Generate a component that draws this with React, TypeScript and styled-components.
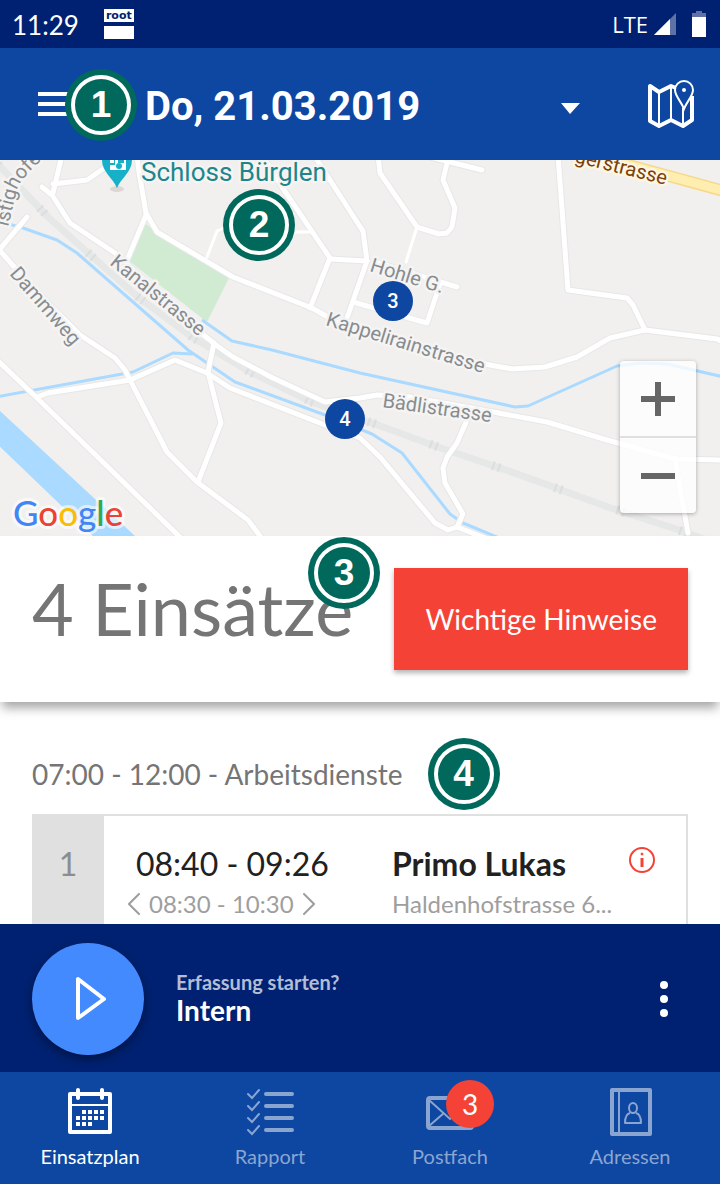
import React from "react";
import styled, { createGlobalStyle } from "styled-components";

const color = {
  primary: "#0d47a1",
  primaryDark: "#002171",
  accent: "#448aff",
  danger: "#f44336",
  guide: "#00695c",
  text: "#212121",
  secondary: "#757575",
  hint: "#9e9e9e",
  line: "#e0e0e0",
  inactive: "#8ba5d1",
};

const GlobalStyle = createGlobalStyle`
  *, *::before, *::after { box-sizing: border-box; }
  html, body { margin: 0; padding: 0; }
  body { font-family: Lato, "Open Sans", sans-serif; background: #fff; }
  button, select { font: inherit; color: inherit; border: 0; margin: 0; padding: 0; background: none; cursor: pointer; }
  h1, h2, h3, p { margin: 0; font-weight: 400; }
  svg { display: block; }
`;

const Screen = styled.div`
  display: flex;
  flex-direction: column;
  height: 100vh;
  overflow: hidden;
`;

/* Status bar */
const StatusBar = styled.div`
  display: flex;
  align-items: center;
  flex: none;
  height: 48px;
  padding: 0 14px 0 12px;
  background: ${color.primaryDark};
  color: #fff;
`;
const Clock = styled.time`
  font-size: 26px;
  line-height: 32px;
  padding-top: 2px;
  margin-right: 25px;
`;
const RootBadge = styled.div`
  display: grid;
  grid-template-rows: 13px 13px;
  gap: 4px;
  width: 30px;
`;
const RootTag = styled.span`
  background: #fff;
  color: ${color.primaryDark};
  font: 700 11px/13px "DejaVu Sans", sans-serif;
  text-align: center;
`;
const RootBlock = styled.span`
  background: #fff;
`;
const StatusIcons = styled.div`
  display: flex;
  align-items: center;
  margin-left: auto;
`;
const Network = styled.span`
  font-family: "Open Sans", sans-serif;
  font-size: 22px;
  line-height: 32px;
  margin-right: 6px;
`;
const Battery = styled.svg`
  margin-left: 16px;
`;

/* App bar */
const AppBar = styled.header`
  position: relative;
  display: flex;
  align-items: center;
  flex: none;
  height: 112px;
  padding: 0 26px 0 38px;
  background: ${color.primary};
  color: #fff;
`;
const IconButton = styled.button`
  display: grid;
  place-items: center;
  flex: none;
`;
const DatePicker = styled.div`
  display: grid;
  align-items: center;
  flex: 1;
  padding-top: 6px;
  margin: 0 68px 0 71px;
`;
const DateSelect = styled.select`
  grid-area: 1 / 1;
  appearance: none;
  font: 700 40px/56px Roboto, sans-serif;
  color: #fff;
  option { color: ${color.text}; }
`;
const DateArrow = styled.svg`
  grid-area: 1 / 1;
  justify-self: end;
  pointer-events: none;
  margin-top: 2px;
`;

/* Numbered guide markers that lie over the screen */
const Guide = styled.span<{ $x?: number; $y?: number }>`
  position: ${(p) => (p.$x === undefined ? "static" : "absolute")};
  left: ${(p) => p.$x ?? 0}px;
  top: ${(p) => p.$y ?? 0}px;
  z-index: 2;
  display: grid;
  flex: none;
  width: 72px;
  height: 72px;
  padding: 6px;
  border-radius: 50%;
  background: ${color.guide};
`;
const GuideRing = styled.span`
  display: grid;
  place-items: center;
  border: 4px solid #fff;
  border-radius: 50%;
  color: #fff;
  font: 700 37px/44px "Liberation Sans", Arial, sans-serif;
`;

/* Map */
const MapArea = styled.section`
  position: relative;
  flex: none;
  height: 376px;
  background: #f1f0ef;
`;
const MapCanvas = styled.svg`
  width: 100%;
  height: 100%;
`;
const Label = styled.text`
  font-family: Roboto, sans-serif;
  font-size: 20px;
  fill: #878c90;
  stroke: #f5f4f3;
  stroke-width: 5px;
  stroke-linejoin: round;
  paint-order: stroke;
`;
const PlaceLabel = styled(Label)`
  font-size: 26px;
  fill: #1c868c;
`;
const MainRoadLabel = styled(Label)`
  fill: #7b3f0c;
  stroke: #fdf6e3;
`;
const Brand = styled.text`
  font: 500 35px Lato, sans-serif;
  stroke: rgba(255, 255, 255, 0.6);
  stroke-width: 6px;
  stroke-linejoin: round;
  paint-order: stroke;
`;
const Pin = styled.button<{ $x: number; $y: number }>`
  position: absolute;
  left: ${(p) => p.$x}px;
  top: ${(p) => p.$y}px;
  width: 40px;
  height: 40px;
  border-radius: 50%;
  background: ${color.primary};
  color: #fff;
  font: 500 20px/40px Roboto, sans-serif;
  text-align: center;
`;
const ZoomControl = styled.div`
  position: absolute;
  right: 24px;
  bottom: 23px;
  display: grid;
  width: 76px;
  border-radius: 4px;
  background: rgba(255, 255, 255, 0.78);
  box-shadow: 0 1px 4px rgba(0, 0, 0, 0.3);
`;
const ZoomButton = styled.button`
  display: grid;
  place-items: center;
  height: 75px;
  & + & {
    height: 77px;
    border-top: 2px solid ${color.line};
  }
`;

/* Summary */
const Summary = styled.section`
  position: relative;
  z-index: 1;
  display: flex;
  align-items: flex-start;
  justify-content: space-between;
  flex: none;
  padding: 32px;
  background: #fff;
  box-shadow: 0 8px 10px -2px rgba(0, 0, 0, 0.35);
`;
const Count = styled.h1`
  font-size: 72px;
  line-height: 80px;
  color: ${color.secondary};
`;
const NoticeButton = styled.button`
  height: 102px;
  padding: 0 31px;
  background: ${color.danger};
  color: #fff;
  font-size: 28px;
  line-height: 36px;
  white-space: nowrap;
  box-shadow: 0 3px 5px rgba(0, 0, 0, 0.3);
`;

/* Job list */
const Jobs = styled.main`
  flex: 1;
  min-height: 0;
  overflow: hidden;
  padding: 36px 32px 0;
`;
const SlotHeader = styled.div`
  display: flex;
  align-items: center;
  gap: 25px;
  padding-bottom: 4px;
`;
const SlotTitle = styled.h2`
  font-size: 28px;
  line-height: 36px;
  color: ${color.secondary};
`;
const JobCard = styled.article`
  display: grid;
  grid-template-columns: 72px minmax(0, 1fr);
  height: 160px;
  background: ${color.line};
  border: 2px solid ${color.line};
  border-left: 0;
`;
const JobNumber = styled.span`
  padding-top: 28px;
  text-align: center;
  font-size: 32px;
  line-height: 40px;
  color: #8d8d8d;
`;
const JobBody = styled.div`
  display: grid;
  grid-template-columns: 256px minmax(0, 1fr) 26px;
  grid-template-rows: 40px 40px;
  padding: 28px 31px 0 32px;
  background: #fff;
`;
const JobTime = styled.p`
  font-size: 32px;
  line-height: 40px;
  color: ${color.text};
`;
const JobName = styled.h3`
  font-size: 32px;
  line-height: 40px;
  font-weight: 700;
  color: ${color.text};
`;
const JobWindow = styled.p`
  display: flex;
  align-items: center;
  gap: 9px;
  margin-left: -8px;
  font-size: 24px;
  line-height: 40px;
  color: ${color.hint};
`;
const JobAddress = styled.p`
  font-size: 24px;
  line-height: 40px;
  color: ${color.hint};
`;
const InfoButton = styled(IconButton)`
  height: 32px;
`;

/* Recorder */
const Recorder = styled.section`
  display: flex;
  align-items: center;
  flex: none;
  height: 148px;
  padding: 2px 44px 0 32px;
  background: ${color.primaryDark};
  color: #fff;
`;
const PlayButton = styled(IconButton)`
  width: 112px;
  height: 112px;
  padding-left: 4px;
  border-radius: 50%;
  background: ${color.accent};
  box-shadow: 0 4px 10px rgba(0, 0, 0, 0.4);
`;
const RecorderText = styled.div`
  flex: 1;
  padding: 0 0 2px 32px;
`;
const RecorderHint = styled.p`
  font-size: 20px;
  line-height: 24px;
  font-weight: 700;
  color: #b3bdd5;
`;
const RecorderTitle = styled.p`
  font-size: 28px;
  line-height: 32px;
  font-weight: 700;
`;
const MoreButton = styled(IconButton)`
  width: 24px;
  height: 48px;
`;

/* Bottom navigation */
const BottomNav = styled.nav`
  display: grid;
  grid-template-columns: repeat(4, 1fr);
  flex: none;
  height: 112px;
  background: ${color.primary};
`;
const Tab = styled.a<{ $active?: boolean }>`
  display: flex;
  flex-direction: column;
  align-items: center;
  gap: 8px;
  padding-top: 16px;
  font-size: 20px;
  line-height: 24px;
  text-decoration: none;
  color: ${(p) => (p.$active ? "#fff" : color.inactive)};
`;
const TabIcon = styled.span`
  position: relative;
`;
const TabBadge = styled.span`
  position: absolute;
  left: 20px;
  top: -8px;
  width: 48px;
  height: 48px;
  border-radius: 50%;
  background: ${color.danger};
  color: #fff;
  font-size: 28px;
  line-height: 48px;
  text-align: center;
`;

const GuideMark = ({ n, x, y }: { n: number; x?: number; y?: number }) => (
  <Guide $x={x} $y={y}>
    <GuideRing>{n}</GuideRing>
  </Guide>
);

const roads = [
  "M137 155L139 172L146 213L157 232L233 277L312 308L328 317L400 345L490 365L512 369L545 367L577 357L610 338L645 330L717 339L724 343",
  "M558 155L568 290L627 298L633 305L645 330",
  "M378 155L380 173L417 227L439 234L447 233L452 227L455 208L443 180L447 163",
  "M430 157L482 170",
  "M312 152L357 222L363 231L367 261",
  "M262 155L282 187L330 258L310 308",
  "M330 259L367 261L347 318",
  "M353 302L427 323L440 284",
  "M375 262L457 287",
  "M146 215L128 258",
  "M42 187L52 195L70 223L115 253L200 332L216 345L233 357L273 378L325 402L360 398L377 395L410 397L493 412L547 422L607 440L675 459L724 460",
  "M675 459L688 533",
  "M62 155L53 193",
  "M53 184L87 180L110 164",
  "M27 217L0 249L-4 250",
  "M-4 246L30 285L80 335L115 358L125 370L130 380L167 452L197 482L248 520L263 540",
  "M-4 359L37 398L183 540",
  "M37 397L48 393L130 380L175 360L207 373L230 388L325 425L360 438L380 457L435 523L448 530L457 527L490 540",
  "M457 527L463 514L445 483L443 468L447 457L457 443L467 420",
  "M214 343L208 372L221 423L198 482",
];
const lanes = ["M417 227L406 262", "M207 257L217 231L226 227", "M312 232L290 232"];
const streams = [
  "M5 223L23 228L57 240L77 253L188 350L235 382L325 415L372 434L402 453L450 514L463 523L504 540",
  "M-4 397L133 372L173 353L193 354",
  "M202 320L232 341L272 350L360 373L515 407L528 406L617 366L640 363L667 364L724 377",
];
const railway =
  "M-6 160L48 217L87 252L138 297L192 337L250 372L312 402L375 424L438 447L503 469L545 484L608 507L673 528L706 540";

const MapDrawing = () => (
  <MapCanvas viewBox="0 160 720 376" preserveAspectRatio="xMidYMid slice" role="img" aria-label="Karte Bürglen">
    <rect x="-600" y="160" width="1920" height="376" fill="#f1f0ef" />
    <path d="M146 224L157 233L229 278L207 322L128 260Z" fill="#d0ebd2" />
    <path d="M-4 407L0 411L135 536H93L-4 443Z" fill="#aadaff" />
    <g fill="none" strokeLinejoin="round">
      <path d={railway} stroke="#e6e7e7" strokeWidth="7" />
      <path d={railway} stroke="#d6d9db" strokeWidth="9" strokeDasharray="2 4 2 58" opacity="0.7" />
      {streams.map((d) => <path key={d} d={d} stroke="#aadaff" strokeWidth="3" />)}
      <g strokeLinecap="round">
        {roads.map((d) => <path key={d} d={d} stroke="#e7e7e7" strokeWidth="7" />)}
        {roads.map((d) => <path key={d} d={d} stroke="#fff" strokeWidth="5" />)}
        {lanes.map((d) => <path key={d} d={d} stroke="#fff" strokeWidth="3" />)}
      </g>
      <path d="M570 149L724 191" stroke="#f8d98b" strokeWidth="12" />
      <path d="M570 149L724 191" stroke="#ffeeaf" strokeWidth="9" />
    </g>
    <ellipse cx="117" cy="189" rx="7" ry="3" fill="#dcd6d4" />
    <path d="M102 160H132C132 172 121 178 117 188C113 178 102 172 102 160Z" fill="#16b1c9" />
    <path d="M110 160h4v3h-4zM115 160h3v3h6v-3h2v10h-16v-5h5z" fill="#fff" />
    <circle cx="119" cy="166" r="3" fill="#16b1c9" />
    <PlaceLabel x="141" y="181">Schloss Bürglen</PlaceLabel>
    <defs>
      <path id="istighofen" d="M8 227L17 190Q21 176 54 150" />
    </defs>
    <Label>
      <textPath href="#istighofen">istighofe</textPath>
    </Label>
    <Label transform="translate(109 264) rotate(39)">Kanalstrasse</Label>
    <Label transform="translate(9 274) rotate(49)">Dammweg</Label>
    <Label transform="translate(369 271) rotate(17)">Hohle G.</Label>
    <Label transform="translate(325 325) rotate(17)">Kappelirainstrasse</Label>
    <Label transform="translate(382 407) rotate(8)">Bädlistrasse</Label>
    <MainRoadLabel transform="translate(574 162) rotate(14)">gerstrasse</MainRoadLabel>
    <Brand x="13" y="526">
      <tspan fill="#4285f4">G</tspan>
      <tspan fill="#ea4335">o</tspan>
      <tspan fill="#fbbc05">o</tspan>
      <tspan fill="#4285f4">g</tspan>
      <tspan fill="#34a853">l</tspan>
      <tspan fill="#ea4335">e</tspan>
    </Brand>
  </MapCanvas>
);

const MenuIcon = () => (
  <svg width="36" height="24" viewBox="0 0 36 24" fill="#fff">
    <path d="M0 0h36v4H0zM0 10h36v4H0zM0 20h36v4H0z" />
  </svg>
);
const MapIcon = () => (
  <svg width="46" height="48" viewBox="0 0 46 48" fill="none" stroke="#fff">
    <path d="M28 8L23 6L11 12L2 6V41L11 46L23 40L35 46L44 40V16" strokeWidth="4" strokeLinejoin="round" />
    <path d="M11 12V46M23 6V40M35 28V46" strokeWidth="2" />
    <path d="M36 29C33 21 27 16 27 10A9 9 0 0 1 45 10C45 16 39 21 36 29Z" fill={color.primary} strokeWidth="2" />
    <circle cx="36" cy="10" r="2" fill="#fff" stroke="none" />
  </svg>
);
const CalendarIcon = () => (
  <svg width="48" height="48" viewBox="0 0 48 48" fill="none" stroke="currentColor">
    <rect x="4" y="6" width="40" height="38" strokeWidth="4" strokeLinejoin="round" />
    <path d="M4 17H44" strokeWidth="2" />
    <path d="M12 2V10M36 2V10" strokeWidth="4" strokeLinecap="round" />
    <path d="M16 24H38" strokeWidth="4" strokeDasharray="4 2" />
    <path d="M10 30H38M10 36H26" strokeWidth="4" strokeDasharray="4 2" />
  </svg>
);
const ChecklistIcon = () => (
  <svg width="48" height="48" viewBox="0 0 48 48" fill="none" stroke="currentColor" strokeLinecap="round">
    <path d="M20 6H46M20 18H46M20 30H46M20 42H46" strokeWidth="4" />
    <path d="M2 6L6 10L13 2M2 18L6 22L13 14M2 30L6 34L13 26M2 42L6 46L13 38" strokeWidth="2" />
  </svg>
);
const MailIcon = () => (
  <svg width="48" height="48" viewBox="0 0 48 48" fill="none" stroke="currentColor">
    <rect x="2" y="10" width="44" height="30" rx="2" strokeWidth="4" />
    <path d="M3 12L24 31L45 12M3 38L18 25M45 38L30 25" strokeWidth="2" />
  </svg>
);
const ContactsIcon = () => (
  <svg width="48" height="48" viewBox="0 0 48 48" fill="none" stroke="currentColor">
    <rect x="6" y="2" width="38" height="44" strokeWidth="4" strokeLinejoin="round" />
    <path d="M13 3V45" strokeWidth="2" />
    <ellipse cx="27" cy="20" rx="4" ry="5" strokeWidth="2" />
    <path d="M24 25C20 26 19 30 19 35H35C35 30 34 26 30 25" strokeWidth="2" strokeLinejoin="round" />
  </svg>
);
const Chevron = ({ d }: { d: string }) => (
  <svg width="12" height="22" viewBox="0 0 12 22" fill="none" stroke="currentColor" strokeWidth="2" strokeLinecap="round">
    <path d={d} />
  </svg>
);

export default function App() {
  return (
    <Screen>
      <GlobalStyle />
      <StatusBar>
        <Clock>11:29</Clock>
        <RootBadge>
          <RootTag>root</RootTag>
          <RootBlock />
        </RootBadge>
        <StatusIcons>
          <Network>LTE</Network>
          <svg width="22" height="22" viewBox="0 0 22 22">
            <path d="M22 0V22H0Z" fill="#5f72a5" />
            <path d="M16 6V22H0Z" fill="#fff" />
          </svg>
          <Battery width="14" height="26" viewBox="0 0 14 26">
            <path d="M4 0h6v2h4v5H0V2h4z" fill="#5f72a5" />
            <path d="M0 6h14v20H0z" fill="#fff" />
          </Battery>
        </StatusIcons>
      </StatusBar>

      <AppBar>
        <IconButton aria-label="Menü">
          <MenuIcon />
        </IconButton>
        <DatePicker>
          <DateSelect aria-label="Datum" defaultValue="21">
            <option value="21">Do, 21.03.2019</option>
          </DateSelect>
          <DateArrow width="19" height="11" viewBox="0 0 19 11">
            <path d="M0 0H19L9 11Z" fill="#fff" />
          </DateArrow>
        </DatePicker>
        <IconButton aria-label="Karte">
          <MapIcon />
        </IconButton>
        <GuideMark n={1} x={65} y={21} />
      </AppBar>

      <MapArea>
        <MapDrawing />
        <Pin $x={373} $y={121}>3</Pin>
        <Pin $x={325} $y={239}>4</Pin>
        <ZoomControl>
          <ZoomButton aria-label="Vergrössern">
            <svg width="34" height="34" viewBox="0 0 34 34">
              <path d="M14 0h6v14h14v6H20v14h-6V20H0v-6h14z" fill="#666" />
            </svg>
          </ZoomButton>
          <ZoomButton aria-label="Verkleinern">
            <svg width="34" height="6" viewBox="0 0 34 6">
              <path d="M0 0h34v6H0z" fill="#666" />
            </svg>
          </ZoomButton>
        </ZoomControl>
        <GuideMark n={2} x={223} y={29} />
      </MapArea>

      <Summary>
        <Count>4 Einsätze</Count>
        <NoticeButton>Wichtige Hinweise</NoticeButton>
        <GuideMark n={3} x={308} y={1} />
      </Summary>

      <Jobs>
        <SlotHeader>
          <SlotTitle>07:00 - 12:00 - Arbeitsdienste</SlotTitle>
          <GuideMark n={4} />
        </SlotHeader>
        <JobCard>
          <JobNumber>1</JobNumber>
          <JobBody>
            <JobTime>08:40 - 09:26</JobTime>
            <JobName>Primo Lukas</JobName>
            <InfoButton aria-label="Information">
              <svg width="26" height="26" viewBox="0 0 26 26" fill="none" stroke={color.danger} strokeWidth="2">
                <circle cx="13" cy="13" r="12" />
                <path d="M13 11V20" strokeWidth="3" />
                <circle cx="13" cy="7" r="1" fill={color.danger} strokeWidth="1" />
              </svg>
            </InfoButton>
            <JobWindow>
              <Chevron d="M11 1L1 11L11 21" />
              08:30 - 10:30
              <Chevron d="M1 1L11 11L1 21" />
            </JobWindow>
            <JobAddress>Haldenhofstrasse 6...</JobAddress>
          </JobBody>
        </JobCard>
      </Jobs>

      <Recorder>
        <PlayButton aria-label="Erfassung starten">
          <svg width="32" height="46" viewBox="0 0 32 46" fill="none" stroke="#fff" strokeWidth="4" strokeLinejoin="round">
            <path d="M4 3V42L30 23Z" />
          </svg>
        </PlayButton>
        <RecorderText>
          <RecorderHint>Erfassung starten?</RecorderHint>
          <RecorderTitle>Intern</RecorderTitle>
        </RecorderText>
        <MoreButton aria-label="Mehr">
          <svg width="8" height="36" viewBox="0 0 8 36" fill="#fff">
            <circle cx="4" cy="4" r="4" />
            <circle cx="4" cy="18" r="4" />
            <circle cx="4" cy="32" r="4" />
          </svg>
        </MoreButton>
      </Recorder>

      <BottomNav>
        <Tab href="#einsatzplan" $active>
          <TabIcon><CalendarIcon /></TabIcon>
          Einsatzplan
        </Tab>
        <Tab href="#rapport">
          <TabIcon><ChecklistIcon /></TabIcon>
          Rapport
        </Tab>
        <Tab href="#postfach">
          <TabIcon>
            <MailIcon />
            <TabBadge>3</TabBadge>
          </TabIcon>
          Postfach
        </Tab>
        <Tab href="#adressen">
          <TabIcon><ContactsIcon /></TabIcon>
          Adressen
        </Tab>
      </BottomNav>
    </Screen>
  );
}
